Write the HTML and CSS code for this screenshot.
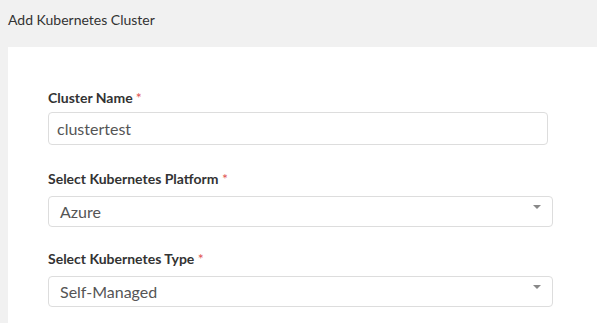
FILE: index.html
```html
<!DOCTYPE html>
<html lang="en">
<head>
  <meta charset="UTF-8" />
  <meta name="viewport" content="width=device-width, initial-scale=1.0" />
  <title>Add Kubernetes Cluster</title>
  <link rel="stylesheet" href="styles.css">
</head>
<body>
  <div class="page-header">Add Kubernetes Cluster</div>

  <div class="card">
    <form class="cluster-form">
      <div class="field">
        <label for="clusterName">Cluster Name<span class="req req-tight">*</span></label>
        <input type="text" id="clusterName" class="text-input" value="clustertest">
      </div>

      <div class="field field-select">
        <label>Select Kubernetes Platform <span class="req">*</span></label>
        <div class="select-box">
          <span class="select-value">Azure</span>
          <b class="select-arrow"></b>
        </div>
      </div>

      <div class="field field-select field-last">
        <label>Select Kubernetes Type <span class="req">*</span></label>
        <div class="select-box">
          <span class="select-value">Self-Managed</span>
          <b class="select-arrow"></b>
        </div>
      </div>
    </form>
  </div>
</body>
</html>
```

FILE: styles.css
```css
* {
  box-sizing: border-box;
}

html, body {
  height: 100%;
}

body {
  margin: 0;
  padding: 0;
  background-color: #f1f1f1;
  font-family: Lato, "Open Sans", Arial, sans-serif;
  color: #333;
  overflow: hidden;
  display: flex;
  flex-direction: column;
}

.page-header {
  font-size: 14px;
  line-height: 20px;
  padding: 10px 8px 17px;
  color: #333;
}

.card {
  flex: 1;
  margin-left: 8px;
  background: #fff;
  padding: 42px 0 0 40px;
}

.field label {
  display: block;
  font-size: 14px;
  font-weight: bold;
  line-height: 18px;
  color: #333;
  margin-bottom: 5px;
}

.req {
  color: #e05454;
  font-weight: normal;
}

.req-tight {
  margin-left: 3px;
}

.field-select {
  margin-top: 25px;
}

.field-select label {
  margin-bottom: 8px;
}

.field-last {
  margin-top: 23px;
}

.text-input {
  display: block;
  width: 500px;
  height: 33px;
  padding: 0 8px;
  border: 1px solid #ddd;
  border-radius: 4px;
  font-family: inherit;
  font-size: 16px;
  line-height: 31px;
  color: #555;
  background: #fff;
  outline: none;
}

.select-box {
  display: flex;
  justify-content: space-between;
  width: 505px;
  height: 31px;
  padding: 0 11px 0 11px;
  border: 1px solid #ddd;
  border-radius: 4px;
  background: #fff;
}

.select-value {
  font-size: 16px;
  line-height: 29px;
  color: #555;
}

.select-arrow {
  align-self: flex-start;
  margin-top: 8px;
  width: 0;
  height: 0;
  border-style: solid;
  border-width: 4px 4px 0 4px;
  border-color: #888 transparent transparent transparent;
}
```
